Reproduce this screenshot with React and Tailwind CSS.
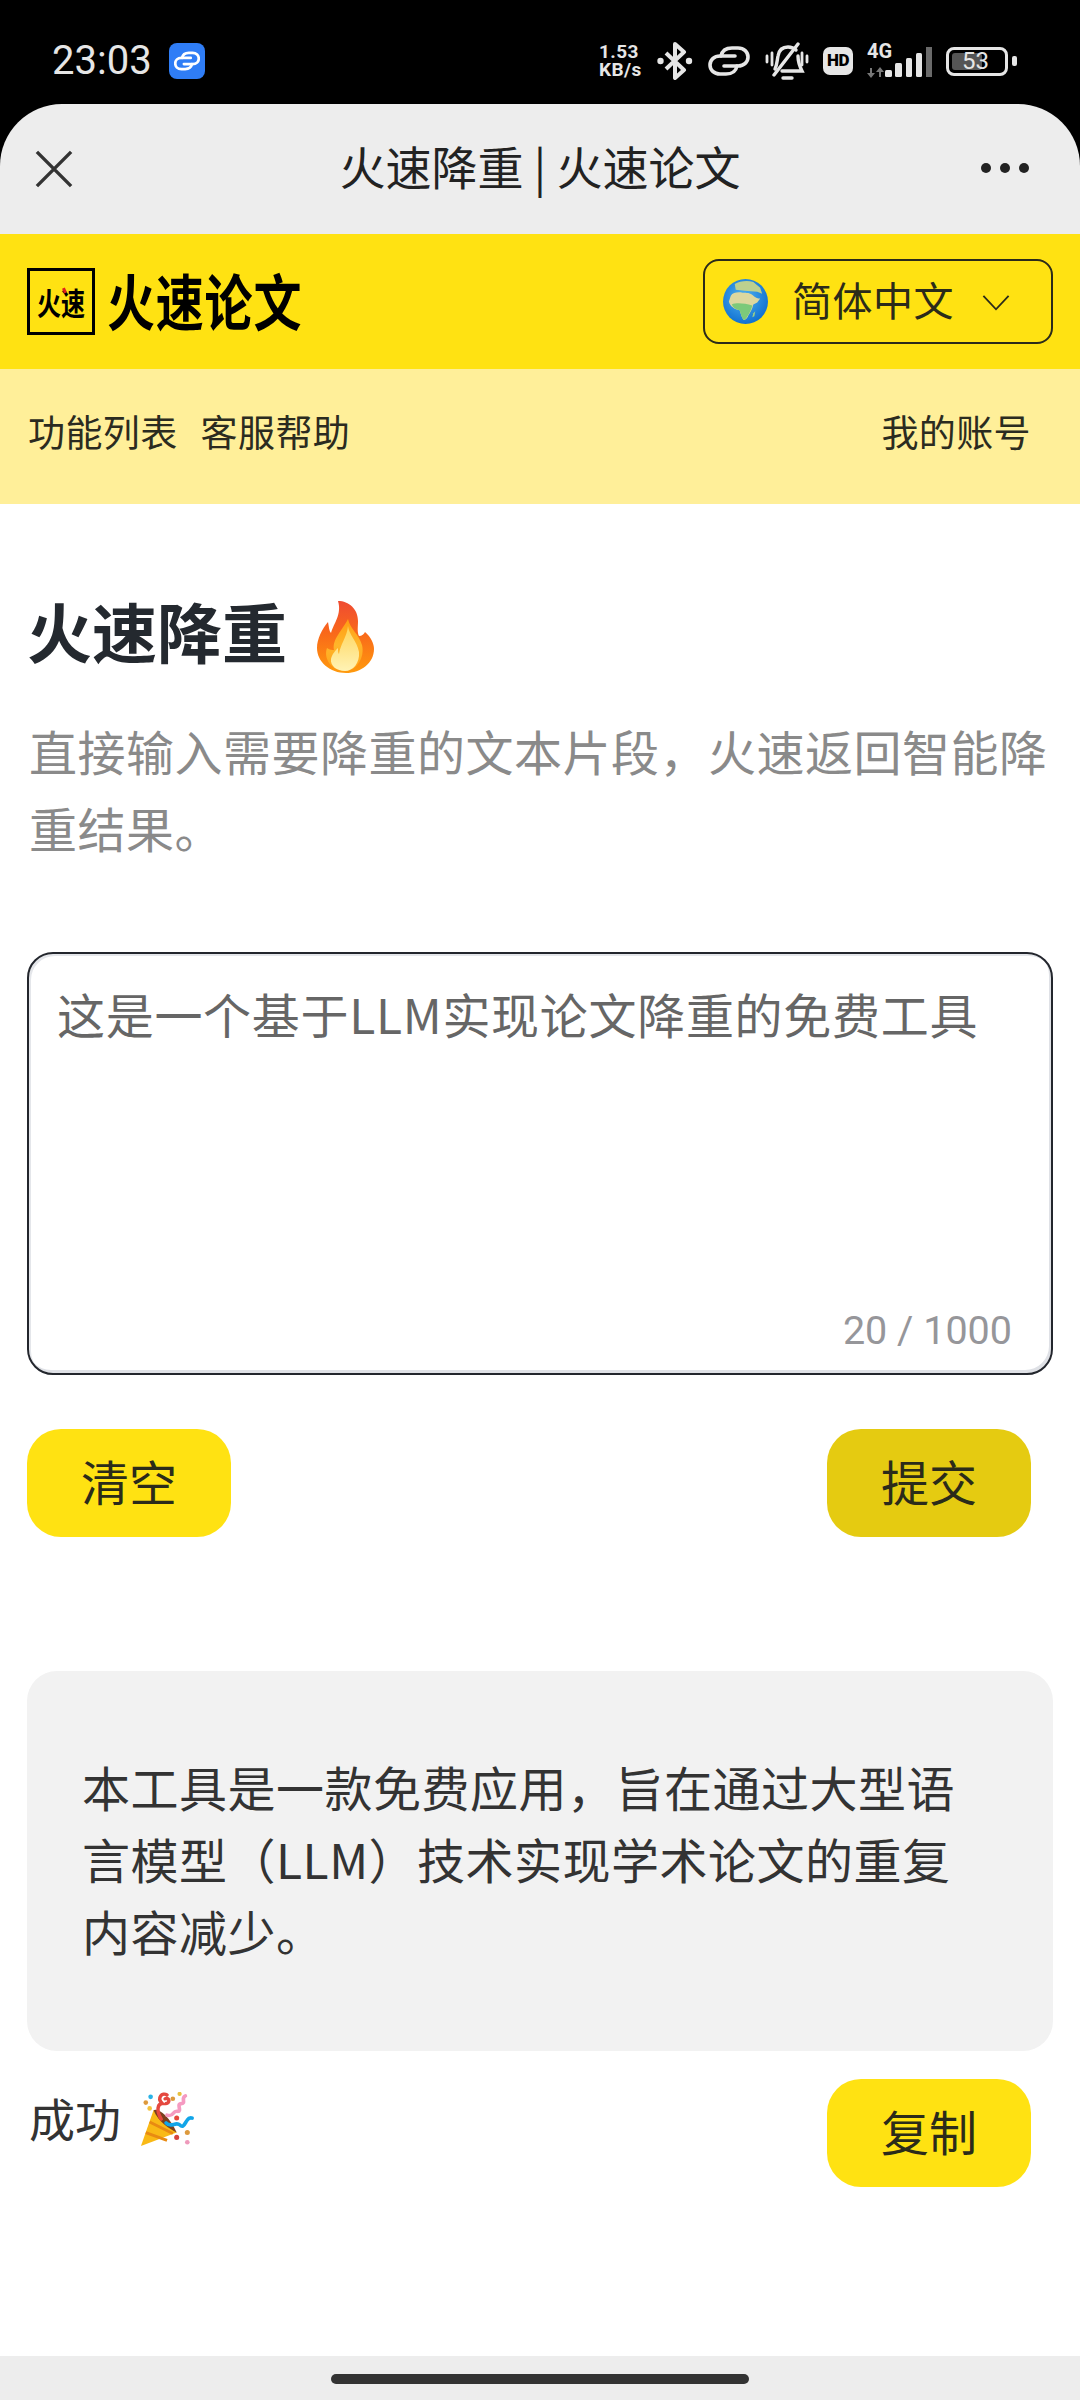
const cjk = { fontFamily: '"Noto Sans CJK SC", "Noto Sans", sans-serif' };

function Globe() {
  return (
    <svg width="45" height="45" viewBox="0 0 46 46">
      <defs>
        <radialGradient id="g" cx="45%" cy="40%" r="62%">
          <stop offset="0" stopColor="#4fb3f2" />
          <stop offset="1" stopColor="#0f6fd0" />
        </radialGradient>
      </defs>
      <circle cx="23" cy="23" r="23" fill="url(#g)" />
      <path d="M12 5 C17 2 25 1 31 3 L38 9 L40 15 L35 13 L22 12 L13 11 Z" fill="#bcd08f" />
      <path d="M8 17 C10 14 15 13 20 14 C24 14 28 14 31 17 C33 19 36 20 38 20 L35 24 L31 26 C30 31 28 34 26 37 C25 40 23 42 21 42 C19 39 18 35 17 32 C12 31 7 28 6 23 Z" fill="#dcd79f" />
      <path d="M9 26 C14 24 22 25 30 27 C29 31 27 35 25 38 C24 40 22 42 21 42 C19 39 18 35 17 32 C13 31 10 29 9 26 Z" fill="#7cc97a" />
      <path d="M31 35 L33 33 L32 38 L30 39 Z" fill="#9ccf86" />
    </svg>
  );
}

function Fire() {
  return (
    <svg width="57" height="72" viewBox="0 0 57 72">
      <defs>
        <linearGradient id="f1" x1="0" y1="0" x2="0" y2="1">
          <stop offset="0" stopColor="#ef4b32" />
          <stop offset="0.45" stopColor="#f9691a" />
          <stop offset="1" stopColor="#ff9a0d" />
        </linearGradient>
        <linearGradient id="f2" x1="0" y1="0" x2="0" y2="1">
          <stop offset="0" stopColor="#ff9c12" />
          <stop offset="0.5" stopColor="#ffb52a" />
          <stop offset="1" stopColor="#ffa51c" />
        </linearGradient>
        <linearGradient id="f3" x1="0" y1="0" x2="0" y2="1">
          <stop offset="0" stopColor="#ffd45a" />
          <stop offset="1" stopColor="#fff3b5" />
        </linearGradient>
      </defs>
      <path d="M21 0 C32 0 41 8 41 20 C41 26 40 31 42 35 C45 35 47 33 48 31 C54 36 57 43 57 48 C57 62 44 72 29 72 C13 72 0 61 0 47 C0 38 5 28 11 21 C12 26 12 30 14 32 C17 22 25 13 21 0 Z" fill="url(#f1)" />
      <path d="M31 18 C33 28 42 33 45 44 C48 56 40 70 28 70 C15 70 6 58 10 47 C13 49 15 49 17 49 C15 38 25 30 31 18 Z" fill="url(#f2)" />
      <path d="M31 25 C32 34 40 40 42 51 C43 62 36 70 28 70 C20 70 13 65 14 58 C15 53 19 49 21 47 C21 50 21 52 22 53 C23 44 30 36 31 25 Z" fill="url(#f3)" />
    </svg>
  );
}

function Party() {
  return (
    <svg width="56" height="56" viewBox="0 0 58 58">
      <path d="M1 56 L14 19 L38 42 Z" fill="#f9b916" />
      <path d="M6 42 L28 50 M10 31 L34 43" stroke="#e88a12" strokeWidth="3" fill="none" />
      <path d="M14 19 C18 16 30 24 38 42 C30 38 20 32 14 19 Z" fill="#7b3f1d" />
      <path d="M22 28 C16 18 19 12 23 12 C17 6 23 0 28 3 M26 7 C31 5 31 12 27 12" stroke="#e5483f" strokeWidth="3.6" fill="none" strokeLinecap="round" />
      <path d="M28 24 C36 26 33 19 39 20 C44 20 37 12 43 12 C48 12 42 6 47 4" stroke="#f59ac1" strokeWidth="3.8" fill="none" strokeLinecap="round" />
      <path d="M27 32 C32 38 37 30 41 34 C45 38 46 33 49 29 C51 26 53 27 54 27" stroke="#12a5e8" strokeWidth="3.8" fill="none" strokeLinecap="round" />
      <circle cx="6" cy="11" r="2.4" fill="#dd9a3d" />
      <circle cx="11" cy="5" r="2.4" fill="#29b2e6" />
      <circle cx="10" cy="17" r="2.4" fill="#f5c33b" />
      <circle cx="34" cy="7" r="2.4" fill="#dd9a3d" />
      <circle cx="41" cy="2" r="2.2" fill="#e8c13f" />
      <circle cx="38" cy="27" r="2.6" fill="#e5483f" />
      <circle cx="38" cy="47" r="2.6" fill="#d6443c" />
      <circle cx="49" cy="42" r="2.6" fill="#dd9a3d" />
      <circle cx="49" cy="52" r="2.4" fill="#ee9abb" />
    </svg>
  );
}

function StatusIcons() {
  return (
    <div className="flex items-center text-[#e6e6e6]" style={{ fontFamily: "Roboto, sans-serif" }}>
      <div className="w-[50px] text-[19px] leading-[18px] font-bold tracking-[0.4px] mr-[8px]">
        <div>1.53</div>
        <div>KB/s</div>
      </div>
      <svg width="36" height="38" viewBox="0 0 36 38" className="mr-[15px]" fill="none" stroke="currentColor">
        <path d="M9 11 L27 28 L18 36 V2 L27 10 L9 27" strokeWidth="4" strokeLinejoin="round" />
        <circle cx="3.5" cy="19" r="3.2" fill="currentColor" stroke="none" />
        <circle cx="32" cy="19" r="3.2" fill="currentColor" stroke="none" />
      </svg>
      <svg width="42" height="30" viewBox="0 0 42 30" className="mr-[15px]" fill="none" stroke="currentColor" strokeWidth="3.6" strokeLinecap="round">
        <path d="M27 10 H12 C6 10 2 14 2 19 C2 24 6 28 12 28 H18 C24 28 28 25 29 20" />
        <path d="M16 20 H30 C36 20 40 16 40 11 C40 6 36 2 30 2 H24 C18 2 14 5 13 10" />
      </svg>
      <svg width="44" height="38" viewBox="0 0 44 38" className="mr-[14px]" fill="none" stroke="currentColor" strokeWidth="3.4" strokeLinecap="round">
        <path d="M10 27 C12 23 12 19 13 14 C14 8 18 5 23 5 C26 5 29 6 31 8 M33 14 C33 20 35 25 37 29 H17" />
        <path d="M9 33 L33 2" />
        <path d="M18 36 H27" />
        <path d="M2 14 V20 M7 11 V23 M37 11 V23 M42 14 V20" strokeWidth="2.8" />
      </svg>
      <div className="w-[30px] h-[28px] rounded-[7px] bg-[#e6e6e6] text-black text-[17px] font-black flex items-center justify-center mr-[14px] tracking-[-0.5px]">HD</div>
      <div className="relative w-[18px] h-[34px]">
        <div className="absolute left-0 -top-[3px] text-[20px] leading-[20px] font-bold">4G</div>
        <svg width="18" height="11" viewBox="0 0 18 11" className="absolute left-0 bottom-0" fill="#777">
          <path d="M4 11 L0 6 H3 V1 H5 V6 H8 Z M13 0 L17 5 H14 V10 H12 V5 H9 Z" />
        </svg>
      </div>
      <svg width="47" height="30" viewBox="0 0 47 30" className="mr-[14px] mt-[1px]" fill="currentColor">
        <rect x="0" y="23" width="7" height="7" rx="1.5" />
        <rect x="10" y="16" width="7" height="14" rx="1.5" />
        <rect x="21" y="11" width="6" height="19" rx="1.5" />
        <rect x="31" y="6" width="6" height="24" rx="1.5" />
        <rect x="41" y="0" width="6" height="30" fill="#6a6a6a" />
      </svg>
      <div className="relative w-[62px] h-[29px] rounded-[8px] border-[3px] border-[#e6e6e6] mr-[4px]">
        <div className="absolute left-[3px] top-[3px] bottom-[3px] w-[30px] rounded-[3px] bg-[#555]"></div>
        <div className="absolute inset-0 flex items-center justify-center pr-[3px] text-[24px] leading-none">53</div>
      </div>
      <div className="w-[5px] h-[10px] rounded-[2px] bg-[#e6e6e6]"></div>
    </div>
  );
}

function YButton({ children, dark }) {
  return (
    <button className={`w-[204px] h-[108px] rounded-[34px] text-[48px] leading-none text-[#2b2b1a] flex items-center justify-center pb-[7px] ${dark ? "bg-[#e5cb11]" : "bg-[#ffe212]"}`}>
      {children}
    </button>
  );
}

export default function App() {
  return (
    <div className="w-[1080px] h-[2400px] bg-black flex flex-col overflow-hidden" style={cjk}>
      <div className="h-[104px] shrink-0 flex items-center justify-between pl-[52px] pr-[63px] pt-[18px]">
        <div className="flex items-center gap-[17px]">
          <span className="text-[40px] text-[#e6e6e6] leading-none" style={{ fontFamily: "Roboto, sans-serif" }}>23:03</span>
          <div className="w-[36px] h-[36px] rounded-[8px] bg-[#2f7df6] flex items-center justify-center">
            <svg width="26" height="20" viewBox="0 0 42 30" fill="none" stroke="white" strokeWidth="4.4" strokeLinecap="round">
              <path d="M27 10 H12 C6 10 2 14 2 19 C2 24 6 28 12 28 H18 C24 28 28 25 29 20" />
              <path d="M16 20 H30 C36 20 40 16 40 11 C40 6 36 2 30 2 H24 C18 2 14 5 13 10" />
            </svg>
          </div>
        </div>
        <StatusIcons />
      </div>

      <div className="flex-1 min-h-0 rounded-t-[62px] overflow-hidden bg-[#ededed] flex flex-col">
        <div className="h-[130px] shrink-0 relative flex items-center justify-center">
          <svg width="38" height="38" viewBox="0 0 40 40" className="absolute left-[35px] top-[46px]" stroke="#333" strokeWidth="3.6" fill="none">
            <path d="M2 2 L38 38 M38 2 L2 38" />
          </svg>
          <span className="text-[46px] leading-none text-[#222] pb-[8px]">火速降重 | 火速论文</span>
          <div className="absolute left-[981px] top-[59px] flex gap-[9px]">
            <div className="w-[10px] h-[10px] rounded-full bg-[#222]"></div>
            <div className="w-[10px] h-[10px] rounded-full bg-[#222]"></div>
            <div className="w-[10px] h-[10px] rounded-full bg-[#222]"></div>
          </div>
        </div>

        <div className="h-[135px] shrink-0 bg-[#ffe212] flex items-center justify-between pl-[27px] pr-[27px]">
          <div className="flex items-center">
            <div className="relative w-[68px] h-[67px] border-[3px] border-black flex items-center justify-center">
              <span className="text-[24px] font-bold text-black leading-none scale-y-[1.3]">火速</span>
              <div className="absolute left-[33px] top-[17px] w-[3px] h-[5px] bg-[#e0201c] rotate-[-25deg]"></div>
            </div>
            <div className="ml-[12px] text-[48px] tracking-[0.8px] font-bold text-black leading-none scale-y-[1.28] pb-[4px]">火速论文</div>
          </div>
          <div className="w-[350px] h-[85px] rounded-[16px] border-[2px] border-[#2b2b1a] flex items-center pl-[18px]">
            <Globe />
            <span className="ml-[24px] text-[40px] tracking-[0.5px] text-[#2b2b1a] leading-none pb-[6px]">简体中文</span>
            <svg width="30" height="18" viewBox="0 0 30 20" className="ml-[27px] mt-[2px]" fill="none" stroke="#2b2b1a" strokeWidth="2">
              <path d="M1 2 L15 17 L29 2" />
            </svg>
          </div>
        </div>

        <div className="h-[135px] shrink-0 bg-[#ffef99] flex items-center justify-between pl-[28px] pr-[49px] pb-[11px] text-[37px] tracking-[0.4px] leading-none text-[#2b2b20]">
          <div className="flex gap-[23px]">
            <span>功能列表</span>
            <span>客服帮助</span>
          </div>
          <span>我的账号</span>
        </div>

        <div className="flex-1 min-h-0 bg-white px-[27px]">
          <div className="flex items-center mt-[85px] h-[82px]">
            <h1 className="text-[65px] font-bold text-[#24292f] leading-none">火速降重</h1>
            <div className="ml-[30px] mt-[13px]"><Fire /></div>
          </div>
          <p className="mt-[41px] text-[48px] tracking-[0.5px] leading-[77px] text-[#8a8a8a] ml-[2px] w-[1030px]">直接输入需要降重的文本片段，火速返回智能降重结果。</p>

          <div className="relative mt-[86px] w-[1026px] h-[423px] rounded-[26px] border-[2px] border-[#23262d] bg-white shadow-[inset_2px_2px_0_#e4e6ea,inset_-2px_-3px_0_#dfe1e6]">
            <div className="pl-[28px] pt-[27px] text-[48px] tracking-[0.7px] leading-[64px] text-[#666]">这是一个基于LLM实现论文降重的免费工具</div>
            <div className="absolute right-[39px] bottom-[23px] text-[39.5px] leading-none text-[#96969a]" style={{ fontFamily: "Roboto, sans-serif" }}>20 / 1000</div>
          </div>

          <div className="flex justify-between mt-[54px] pr-[22px]">
            <YButton>清空</YButton>
            <YButton dark>提交</YButton>
          </div>

          <div className="mt-[134px] w-[1026px] h-[380px] rounded-[30px] bg-[#f2f2f2] pl-[55px] pr-[90px] pt-[79px] text-[48px] tracking-[0.5px] leading-[72px] text-[#333]">
            本工具是一款免费应用，旨在通过大型语言模型（LLM）技术实现学术论文的重复内容减少。
          </div>

          <div className="flex justify-between items-start mt-[28px] pr-[22px]">
            <div className="flex items-center ml-[2px] mt-[13px]">
              <span className="text-[46px] leading-none text-[#333] pb-[6px]">成功</span>
              <div className="ml-[19px]"><Party /></div>
            </div>
            <YButton>复制</YButton>
          </div>
        </div>

        <div className="h-[44px] shrink-0 bg-[#ededed] flex items-center justify-center">
          <div className="w-[418px] h-[10px] rounded-full bg-[#333] mt-[1px]"></div>
        </div>
      </div>
    </div>
  );
}
